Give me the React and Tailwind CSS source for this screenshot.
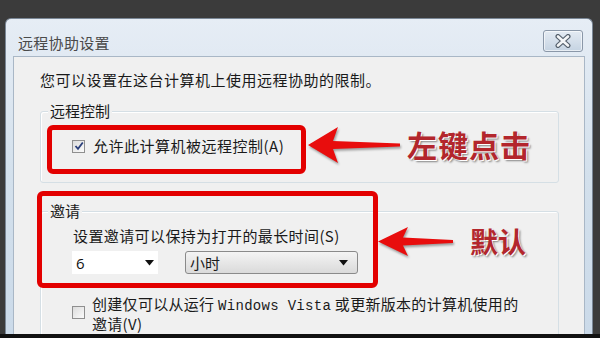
// Remote assistance settings dialog with red annotation overlays.
import React from 'react';

const CJK = { fontFamily: '"Noto Sans CJK SC", "Noto Sans", sans-serif' };
const MONO = { fontFamily: '"Liberation Mono", "Noto Sans CJK SC", monospace' };

function Caret() {
  return (
    <svg width="9" height="6" viewBox="0 0 9 6">
      <path d="M0 0 H9 L4.5 5.5 Z" fill="#111" />
    </svg>
  );
}

function Checkbox({ checked }) {
  return (
    <span className="w-[13px] h-[13px] shrink-0 border border-[#8f8f8f] bg-gradient-to-br from-[#dcdcdc] to-[#fbfbfb] flex items-center justify-center">
      {checked && (
        <svg width="10" height="10" viewBox="0 0 10 10">
          <path d="M1.5 5 L4 7.8 L8.8 1.5" fill="none" stroke="#2b3f7a" strokeWidth="1.8" />
        </svg>
      )}
    </span>
  );
}

function GroupBox({ label, className, children }) {
  return (
    <div className={'relative border border-[#d5dfe5] rounded-[3px] shadow-[inset_1px_1px_0_#fff] ' + className}>
      <span className="absolute left-[7px] top-[-10px] px-[2px] bg-[#f0f0f0] text-[15px] leading-[18px] text-[#1a1a1a]">
        {label}
      </span>
      {children}
    </div>
  );
}

function Arrow({ w, h }) {
  const m = h / 2;
  return (
    <svg width={w} height={h} viewBox={`0 0 ${w} ${h}`} className="drop-shadow-[1px_2px_1px_rgba(0,0,0,0.35)]">
      <polygon
        points={`0,${m} ${30},0 ${25},${m - 4} ${w},${m - 1.5} ${w},${m + 1.5} ${25},${m + 4} ${30},${h}`}
        fill="#e80d0d"
      />
    </svg>
  );
}

export default function App() {
  return (
    <div className="relative w-[600px] h-[338px] overflow-hidden bg-[#3b3b3b] flex flex-col" style={CJK}>
      <div className="h-[18px]" />
      <div className="ml-[5px] w-[588px] h-[316px] rounded-t-[6px] border border-[#7a8796] border-b-0 bg-gradient-to-b from-[#e6edf5] via-[#d3e0ec] to-[#cbdae9] flex flex-col">
        <div className="h-[37px] shrink-0 flex items-start justify-between pl-[12px] pr-[9px] pt-[11px]">
          <span className="mt-[4px] text-[15px] leading-[18px] text-[#4a4a4a] tracking-[0.3px]">远程协助设置</span>
          <div className="w-[40px] h-[22px] rounded-[3px] border border-[#8a97a8] bg-gradient-to-b from-[#e4ebf3] to-[#c5d3e2] shadow-[inset_0_0_0_1px_rgba(255,255,255,0.6)] flex items-center justify-center">
            <svg width="18" height="14" viewBox="0 0 18 14">
              <path d="M4 2.5 L14 11.5 M14 2.5 L4 11.5" stroke="#55606c" strokeWidth="5" strokeLinecap="round" />
              <path d="M4 2.5 L14 11.5 M14 2.5 L4 11.5" stroke="#f4f6f8" strokeWidth="2.6" strokeLinecap="round" />
            </svg>
          </div>
        </div>
        <div className="flex-1 mx-[7px] border border-[#a9b7c6] border-b-0 bg-[#f0f0f0] overflow-hidden flex flex-col">
          <p className="pl-[26px] pt-[13px] text-[15px] leading-[20px] tracking-[0.5px] text-[#1a1a1a]">
            您可以设置在这台计算机上使用远程协助的限制。
          </p>
          <GroupBox label="远程控制" className="mt-[21px] ml-[26px] mr-[25px] h-[72px] shrink-0">
            <div className="flex items-center gap-[8px] pl-[31px] pt-[25px]">
              <Checkbox checked />
              <span className="text-[15px] leading-[18px] tracking-[0.5px] text-[#1a1a1a]">允许此计算机被远程控制(A)</span>
            </div>
          </GroupBox>
          <GroupBox label="邀请" className="mt-[28px] ml-[26px] mr-[25px] h-[200px] shrink-0">
            <div className="pl-[32px] pt-[15px] text-[15px] leading-[18px] tracking-[0.4px] text-[#1a1a1a]">
              设置邀请可以保持为打开的最长时间(S)
            </div>
            <div className="flex items-center gap-[27px] pl-[31px] mt-[6px]">
              <div className="w-[86px] h-[23px] bg-white flex items-center justify-between pl-[4px] pr-[4px]">
                <span className="text-[15px] leading-[18px] text-[#111]" style={{ fontFamily: '"Open Sans", sans-serif' }}>6</span>
                <Caret />
              </div>
              <div className="w-[173px] h-[23px] rounded-[3px] border border-[#8a8a8a] bg-gradient-to-b from-[#f4f4f4] to-[#dadada] flex items-center justify-between pl-[4px] pr-[9px]">
                <span className="text-[15px] leading-[18px] text-[#1a1a1a]">小时</span>
                <Caret />
              </div>
            </div>
            <div className="flex items-start gap-[7px] pl-[31px] mt-[21px]">
              <span className="mt-[11px]">
                <Checkbox />
              </span>
              <span className="text-[15px] leading-[17px] tracking-[0.3px] text-[#1a1a1a]">
                创建仅可以从运行 <span className="text-[14px]" style={MONO}>Windows Vista</span> 或更新版本的计算机使用的
                <br />
                邀请(V)
              </span>
            </div>
          </GroupBox>
        </div>
      </div>
      <div className="flex-1 bg-[#111]" />

      {/* annotation overlays */}
      <div className="absolute left-[47px] top-[125px] w-[259px] h-[49px] border-[5px] border-[#e30000] rounded-[6px]" />
      <div className="absolute left-[37px] top-[191px] w-[341px] h-[97px] border-[5px] border-[#e30000] rounded-[6px]" />
      <div className="absolute left-[308px] top-[127px]">
        <Arrow w={92} h={36} />
      </div>
      <div className="absolute left-[378px] top-[227px]">
        <Arrow w={75} h={29} />
      </div>
      <div
        className="absolute left-[407px] top-[126px] text-[30px] leading-[36px] font-bold tracking-[1px] text-[#b3262c]"
        style={{ textShadow: '1px 1px 0 #fff, 2px 2px 2px rgba(0,0,0,0.45)' }}
      >
        左键点击
      </div>
      <div
        className="absolute left-[470px] top-[224px] text-[28px] leading-[34px] font-bold text-[#b3262c]"
        style={{ textShadow: '1px 1px 0 #fff, 2px 2px 2px rgba(0,0,0,0.45)' }}
      >
        默认
      </div>
    </div>
  );
}
